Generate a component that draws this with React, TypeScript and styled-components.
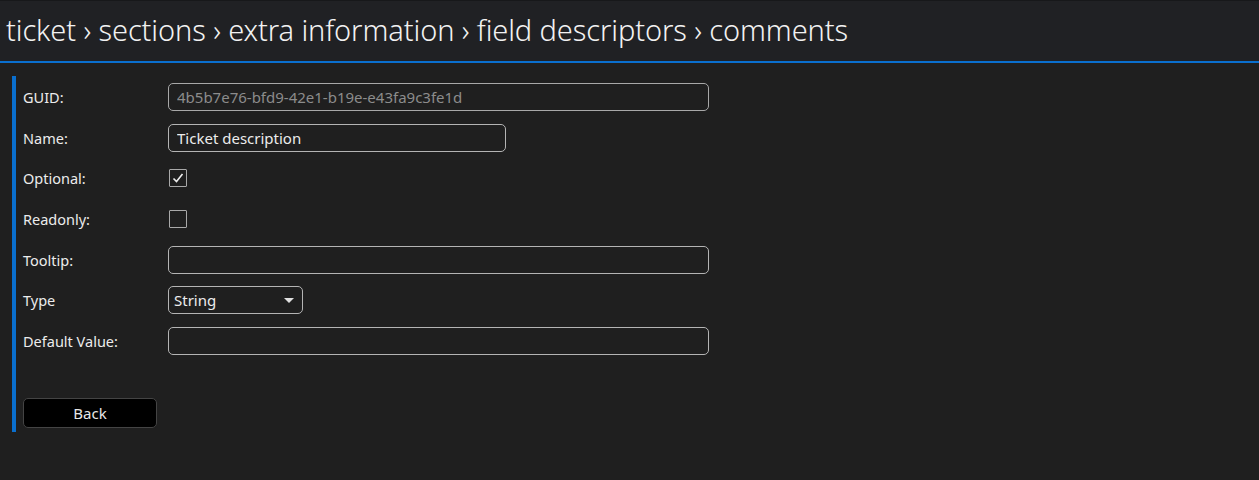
import React, { useState } from 'react';
import styled, { createGlobalStyle } from 'styled-components';

const GlobalStyle = createGlobalStyle`
  html, body {
    margin: 0;
    padding: 0;
    background: #1f1f1f;
  }
  body {
    font-family: "Noto Sans", "Open Sans", sans-serif;
    color: #e8e8e8;
  }
`;

const Page = styled.div`
  min-height: 480px;
  background: #1f1f1f;
`;

const Header = styled.header`
  height: 56px;
  background: #202124;
  border-top: 1px solid #17181a;
  border-bottom: 2px solid #0a6fce;
  display: flex;
  align-items: center;
  padding: 0 0 4px 6px;
`;

const Crumbs = styled.h1`
  margin: 0;
  font-size: 29px;
  font-weight: 300;
  color: #f2f2f2;
  letter-spacing: -0.1px;
`;

const Panel = styled.section`
  margin: 13px 0 0 12px;
  border-left: 4px solid #0a6fce;
  padding: 7px 0 4px 7px;
  display: flex;
  flex-direction: column;
`;

const Fields = styled.div`
  display: flex;
  flex-direction: column;
  gap: 12.7px;
`;

const Row = styled.div`
  display: flex;
  align-items: center;
  height: 28px;
`;

const Label = styled.label`
  width: 145px;
  font-size: 14.5px;
  color: #ececec;
`;

const TextBox = styled.input<{ $width: number }>`
  box-sizing: border-box;
  width: ${p => p.$width}px;
  height: 28px;
  background: #1f1f1f;
  border: 1.5px solid #b4b4b4;
  border-radius: 5px;
  padding: 0 8px;
  font-family: inherit;
  font-size: 15px;
  color: #ececec;
  outline: none;
  &:disabled {
    color: #8c8c8c;
    border-color: #a8a8a8;
  }
`;

const Box = styled.span`
  box-sizing: border-box;
  width: 18px;
  height: 18px;
  margin-left: 1px;
  border: 1.5px solid #a9a9a9;
  border-radius: 1px;
  display: flex;
  align-items: center;
  justify-content: center;
  cursor: pointer;
`;

const Select = styled.div`
  box-sizing: border-box;
  width: 135px;
  height: 28px;
  border: 1.5px solid #b4b4b4;
  border-radius: 5px;
  padding: 0 8px 0 5px;
  display: flex;
  align-items: center;
  justify-content: space-between;
  font-size: 15px;
  color: #ececec;
`;

const Caret = styled.span`
  width: 0;
  height: 0;
  border-left: 5px solid transparent;
  border-right: 5px solid transparent;
  border-top: 5px solid #e0e0e0;
`;

const BackButton = styled.button`
  margin-top: 43px;
  width: 134px;
  height: 30px;
  background: #000;
  border: 1.5px solid #444;
  border-radius: 5px;
  color: #e8e8e8;
  font-family: inherit;
  font-size: 15px;
  cursor: pointer;
`;

const CheckBox: React.FC<{ checked: boolean; onToggle: () => void }> = ({ checked, onToggle }) => (
  <Box onClick={onToggle}>
    {checked && (
      <svg width="12" height="12" viewBox="0 0 12 12">
        <path d="M1.5 6.5 L4.5 9.5 L10.5 2" fill="none" stroke="#eeeeee" strokeWidth="1.6" />
      </svg>
    )}
  </Box>
);

const App: React.FC = () => {
  const [optional, setOptional] = useState(true);
  const [readonly, setReadonly] = useState(false);

  return (
    <Page>
      <GlobalStyle />
      <Header>
        <Crumbs>ticket › sections › extra information › field descriptors › comments</Crumbs>
      </Header>
      <Panel>
        <Fields>
          <Row>
            <Label>GUID:</Label>
            <TextBox $width={541} disabled defaultValue="4b5b7e76-bfd9-42e1-b19e-e43fa9c3fe1d" />
          </Row>
          <Row>
            <Label>Name:</Label>
            <TextBox $width={338} defaultValue="Ticket description" />
          </Row>
          <Row>
            <Label>Optional:</Label>
            <CheckBox checked={optional} onToggle={() => setOptional(!optional)} />
          </Row>
          <Row>
            <Label>Readonly:</Label>
            <CheckBox checked={readonly} onToggle={() => setReadonly(!readonly)} />
          </Row>
          <Row>
            <Label>Tooltip:</Label>
            <TextBox $width={541} />
          </Row>
          <Row>
            <Label>Type</Label>
            <Select>
              String
              <Caret />
            </Select>
          </Row>
          <Row>
            <Label>Default Value:</Label>
            <TextBox $width={541} />
          </Row>
        </Fields>
        <BackButton>Back</BackButton>
      </Panel>
    </Page>
  );
};

export default App;
